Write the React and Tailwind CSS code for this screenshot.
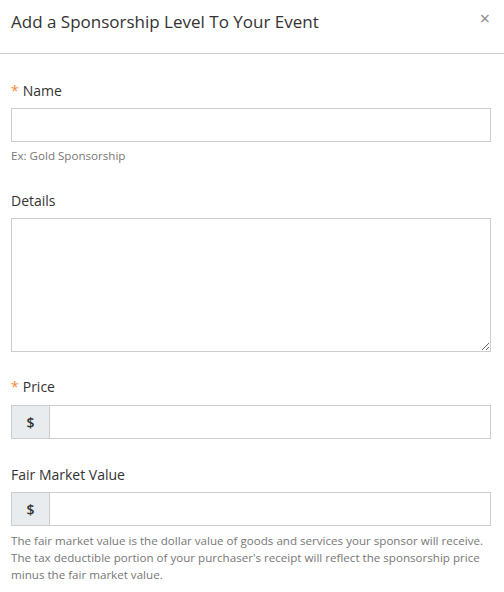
import React from "react";

const Label = ({ required, children, className = "" }) => (
  <label className={`block text-[14px] leading-[18px] text-[#333] ${className}`}>
    {required && <span className="text-[#f08a3c] mr-[4px]">*</span>}
    {children}
  </label>
);

const MoneyInput = () => (
  <div className="flex h-[34px] border border-[#ccc]">
    <span className="w-[38px] flex items-center justify-center bg-[#e9ecef] border-r border-[#ccc] text-[14px] font-semibold text-[#333]">$</span>
    <input className="flex-1 px-2 outline-none" />
  </div>
);

export default function App() {
  return (
    <div className="w-[504px] h-[592px] bg-white" style={{ fontFamily: '"Open Sans", sans-serif' }}>
      <div className="h-[54px] border-b border-[#ccc] flex items-start justify-between pl-[11px] pr-[14px]">
        <h2 className="text-[17px] leading-[24px] pt-[10px] text-[#333]">Add a Sponsorship Level To Your Event</h2>
        <button className="pt-[8px] text-[18px] leading-[20px] text-[#888]">×</button>
      </div>
      <div className="pl-[11px] pr-[13px] pt-[28px]">
        <Label required className="mb-[8px]">Name</Label>
        <input className="block w-full h-[34px] border border-[#ccc] px-2 outline-none" />
        <p className="mt-[6px] text-[11.6px] leading-[15px] text-[#777]">Ex: Gold Sponsorship</p>

        <Label className="mt-[29px] mb-[8px]">Details</Label>
        <textarea className="block w-full h-[134px] border border-[#ccc] px-2 outline-none" />

        <Label required className="mt-[26px] mb-[9px]">Price</Label>
        <MoneyInput />

        <Label className="mt-[27px] mb-[8px]">Fair Market Value</Label>
        <MoneyInput />
        <p className="mt-[6px] text-[11.6px] leading-[17px] text-[#777]">
          The fair market value is the dollar value of goods and services your sponsor will receive. The tax deductible portion of your purchaser's receipt will reflect the sponsorship price minus the fair market value.
        </p>
      </div>
    </div>
  );
}
